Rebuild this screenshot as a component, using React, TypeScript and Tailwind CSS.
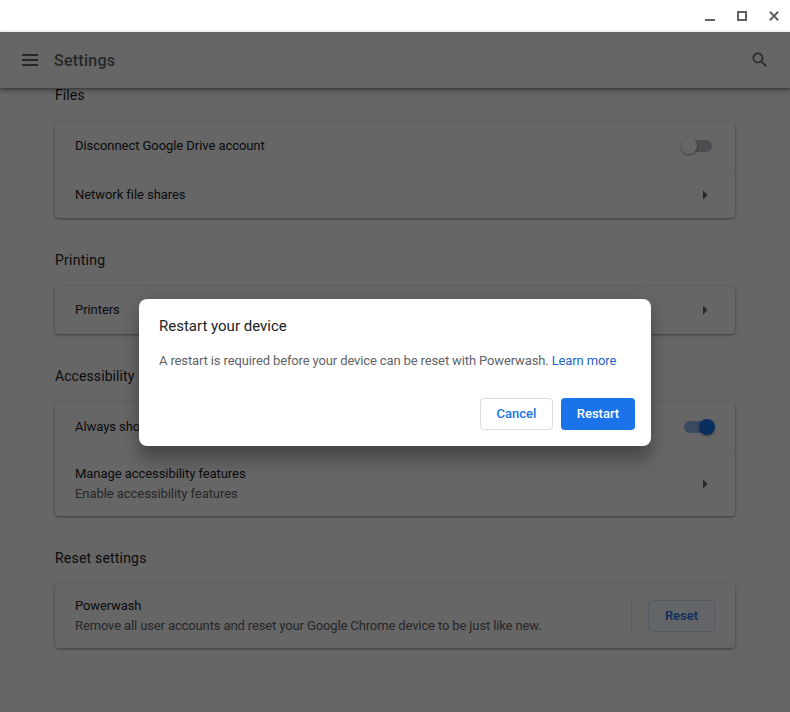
import type { ReactNode } from "react";

function Arrow() {
  return (
    <svg viewBox="0 0 20 20" className="h-5 w-5 fill-[#5f6368]">
      <path d="M8 5.5l4.5 4.5L8 14.5z" />
    </svg>
  );
}

function Toggle({ on }: { on?: boolean }) {
  return (
    <div className={`relative h-3 rounded-full ${on ? "-mr-1 w-7 bg-[#8cb8f4]" : "w-[27px] bg-[#bdc1c6]"}`}>
      <div
        className={`absolute -top-0.5 h-4 w-4 rounded-full shadow-[0_1px_3px_rgba(0,0,0,0.4)] ${
          on ? "left-[15px] bg-[#1a73e8]" : "-left-1 bg-white"
        }`}
      />
    </div>
  );
}

type SectionProps = { title: string; headingClass?: string; children: ReactNode };

function Section({ title, headingClass = "h-[68px] tracking-[0.25px]", children }: SectionProps) {
  return (
    <section>
      <h2 className={`pt-8 text-[14px] leading-5 text-[#202124] ${headingClass}`}>{title}</h2>
      <div className="divide-y divide-black/[0.06] rounded bg-white shadow-[0_1px_2px_rgba(60,64,67,0.4),0_1px_3px_1px_rgba(60,64,67,0.15)]">
        {children}
      </div>
    </section>
  );
}

type RowProps = { label: string; sub?: string; className: string; children: ReactNode };

function Row({ label, sub, className, children }: RowProps) {
  return (
    <div className={`flex items-center justify-between px-5 text-[13px] leading-5 tracking-[-0.06px] ${className}`}>
      <div>
        <div className="text-[#202124]">{label}</div>
        {sub && <div className="text-[#5f6368]">{sub}</div>}
      </div>
      {children}
    </div>
  );
}

export default function App() {
  return (
    <div className="relative flex h-[712px] w-[790px] flex-col overflow-hidden bg-white font-['Roboto',sans-serif]">
      <div className="flex h-8 shrink-0 items-center justify-end gap-4 pr-2">
        <svg viewBox="0 0 16 16" className="h-4 w-4 fill-[#5f6368]">
          <path d="M3 11h10v2H3z" />
        </svg>
        <svg viewBox="0 0 16 16" className="h-4 w-4 fill-none stroke-[#5f6368] stroke-2">
          <path d="M4 4h8v8H4z" />
        </svg>
        <svg viewBox="0 0 16 16" className="h-4 w-4 fill-none stroke-[#5f6368] stroke-2">
          <path d="M3.8 3.8l8.4 8.4M12.2 3.8l-8.4 8.4" />
        </svg>
      </div>

      <div className="flex min-h-0 flex-1 flex-col">
        <header className="z-10 flex h-14 shrink-0 items-center bg-white pr-5 pl-[18px] text-[#5f6368] shadow-[0_2px_5px_rgba(0,0,0,0.4),0_1px_2px_rgba(0,0,0,0.15)]">
          <svg viewBox="0 0 24 24" className="h-6 w-6 fill-current">
            <path d="M4 6h16v2H4zm0 5h16v2H4zm0 5h16v2H4z" />
          </svg>
          <h1 className="mt-0.5 ml-3 flex-1 text-[16px] font-medium tracking-[0.25px]">Settings</h1>
          <svg viewBox="0 0 24 24" className="h-5 w-5 fill-current">
            <path d="M15.5 14h-.79l-.28-.27A6.471 6.471 0 0 0 16 9.5 6.5 6.5 0 1 0 9.5 16c1.61 0 3.09-.59 4.23-1.57l.27.28v.79l5 4.99L20.49 19l-4.99-5zm-6 0C7.01 14 5 11.99 5 9.5S7.01 5 9.5 5 14 7.01 14 9.5 11.99 14 9.5 14z" />
          </svg>
        </header>

        <main className="min-h-0 flex-1 overflow-hidden px-[55px]">
          {/* scrolled so that the first heading touches the toolbar */}
          <div className="-mt-[35px]">
            <Section title="Files" headingClass="h-[69px] tracking-[0.1px]">
              <Row label="Disconnect Google Drive account" className="h-[49px] pr-[23px]">
                <Toggle />
              </Row>
              <Row label="Network file shares" className="h-[47px] pt-px">
                <Arrow />
              </Row>
            </Section>
            <Section title="Printing">
              <Row label="Printers" className="h-12">
                <Arrow />
              </Row>
            </Section>
            <Section title="Accessibility" headingClass="h-[68px] tracking-[0.08px]">
              <Row label="Always show accessibility options in the system menu" className="h-[50px] pt-px pr-[27px]">
                <Toggle on />
              </Row>
              <Row label="Manage accessibility features" sub="Enable accessibility features" className="h-16">
                <Arrow />
              </Row>
            </Section>
            <Section title="Reset settings" headingClass="h-[68px] tracking-[0.2px]">
              <Row
                label="Powerwash"
                sub="Remove all user accounts and reset your Google Chrome device to be just like new."
                className="h-16 tracking-[-0.125px]"
              >
                <div className="flex h-8 border-l border-black/[0.08] pl-4">
                  <button className="h-8 w-[67px] rounded border border-[#d2e3fc] bg-[#fafcff] font-medium tracking-normal text-[#1a73e8]">
                    Reset
                  </button>
                </div>
              </Row>
            </Section>
          </div>
        </main>
      </div>

      <div className="absolute inset-x-0 top-8 bottom-0 z-20 bg-black/60" />

      <div
        role="dialog"
        className="absolute top-[299px] left-[139px] z-30 flex h-[147px] w-[512px] flex-col rounded-lg bg-white p-4 text-[13px] shadow-[0_0_16px_rgba(0,0,0,0.12),0_16px_16px_rgba(0,0,0,0.24)]"
      >
        <h2 className="px-1 text-[15px] leading-[23px] text-[#202124]">Restart your device</h2>
        <p className="mt-[13px] px-1 leading-5 tracking-[-0.13px] text-[#5f6368]">
          A restart is required before your device can be reset with Powerwash.{" "}
          <a className="text-[#2563c9]">Learn more</a>
        </p>
        <div className="mt-auto flex justify-end gap-2 font-medium">
          <button className="h-8 w-[73px] rounded border border-[#dadce0] text-[#1a73e8]">Cancel</button>
          <button className="h-8 w-[74px] rounded bg-[#1a73e8] text-white">Restart</button>
        </div>
      </div>
    </div>
  );
}
